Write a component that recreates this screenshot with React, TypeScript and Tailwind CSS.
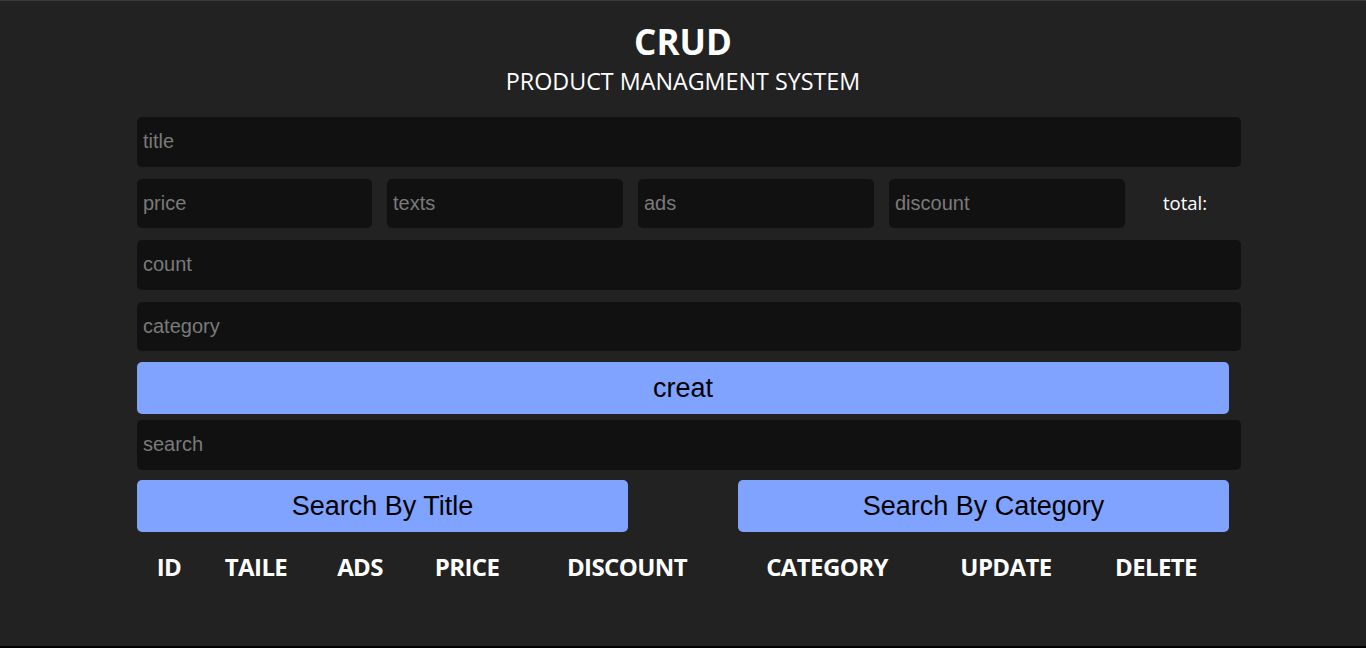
import { useState } from "react";

const inputCls =
  "h-[49.5px] rounded-[5px] bg-[#111111] px-[6px] font-['Liberation_Sans',Arial,sans-serif] text-[20px] text-white outline-none placeholder:text-[#7a7a7a]";

const btnCls =
  "h-[52px] rounded-[5px] bg-[#7fa3ff] font-['Liberation_Sans',Arial,sans-serif] text-[27px] text-black";

const heads: { label: string; w: string }[] = [
  { label: "ID", w: "w-[64px]" },
  { label: "TAILE", w: "w-[110px]" },
  { label: "ADS", w: "w-[98px]" },
  { label: "PRICE", w: "w-[116px]" },
  { label: "DISCOUNT", w: "w-[204px]" },
  { label: "CATEGORY", w: "w-[196px]" },
  { label: "UPDATE", w: "w-[162px]" },
  { label: "DELETE", w: "w-[138px]" },
];

const App = () => {
  const [title, setTitle] = useState("");

  return (
    <div className="flex h-[648px] flex-col border-t border-[#3a3a3a] border-b-2 border-b-black bg-[#222222] text-white">
      <div className="mx-auto flex w-[1092px] flex-col">
        <h1 className="mt-[20px] text-center font-['Open_Sans','Noto_Sans',sans-serif] text-[35px] font-bold leading-[42px]">CRUD</h1>
        <p className="mt-[2px] text-center font-['Open_Sans','Noto_Sans',sans-serif] text-[23.3px] leading-[32px]">
          PRODUCT MANAGMENT SYSTEM
        </p>

        <input
          value={title}
          onChange={(e) => setTitle(e.target.value)}
          className={`${inputCls} mt-[20px] w-[1104px]`}
          placeholder="title"
        />
        <div className="mt-[12px] flex items-center gap-[15px]">
          <input className={`${inputCls} w-[235px]`} placeholder="price" />
          <input className={`${inputCls} w-[236px]`} placeholder="texts" />
          <input className={`${inputCls} w-[236px]`} placeholder="ads" />
          <input className={`${inputCls} w-[236px]`} placeholder="discount" />
          <span className="ml-[23px] font-['Open_Sans','Noto_Sans',sans-serif] text-[18.5px]">total:</span>
        </div>
        <input className={`${inputCls} mt-[12px] w-[1104px]`} placeholder="count" />
        <input className={`${inputCls} mt-[12px] w-[1104px]`} placeholder="category" />
        <button className={`${btnCls} mt-[11px] w-full`}>creat</button>
        <input className={`${inputCls} mt-[6px] w-[1104px]`} placeholder="search" />
        <div className="mt-[10.5px] flex justify-between">
          <button className={`${btnCls} w-[491px]`}>Search By Title</button>
          <button className={`${btnCls} w-[491px]`}>Search By Category</button>
        </div>

        <div className="mt-[20px] flex">
          {heads.map((h) => (
            <div
              key={h.label}
              className={`${h.w} text-center font-['Open_Sans','Noto_Sans',sans-serif] text-[24px] font-bold leading-[30px] tracking-[-0.6px]`}
            >
              {h.label}
            </div>
          ))}
        </div>
      </div>
    </div>
  );
};

export default App;
